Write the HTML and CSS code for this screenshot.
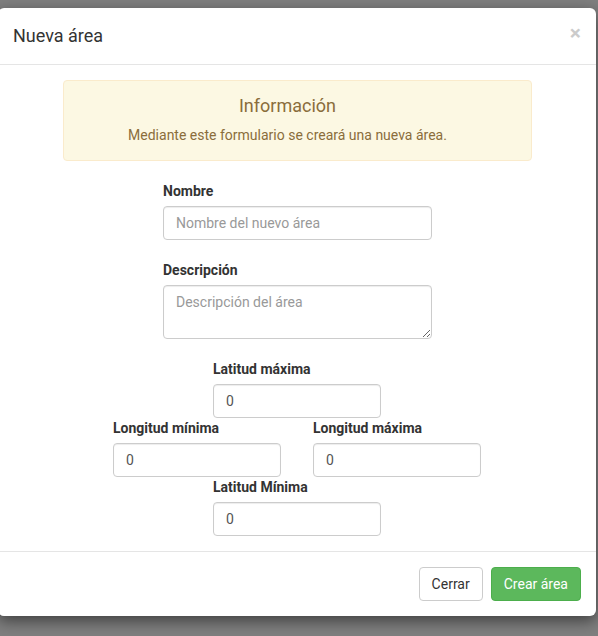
FILE: index.html
```html
<!DOCTYPE html>
<html lang="es">
<head>
<meta charset="utf-8">
<title>Nueva área</title>
<link rel="stylesheet" href="styles.css">
</head>
<body>
<div class="modal">
  <div class="modal-header">
    <h4 class="modal-title">Nueva área</h4>
    <button class="close" type="button">×</button>
  </div>
  <div class="modal-body">
    <div class="alert">
      <h4 class="alert-title">Información</h4>
      <p class="alert-text">Mediante este formulario se creará una nueva área.</p>
    </div>
    <div class="form-group wide">
      <label class="label">Nombre</label>
      <input class="input" type="text" placeholder="Nombre del nuevo área">
    </div>
    <div class="form-group wide">
      <label class="label">Descripción</label>
      <textarea class="input textarea" rows="2" placeholder="Descripción del área"></textarea>
    </div>
    <div class="coords">
      <div class="coord-row">
        <div class="coord">
          <label class="label">Latitud máxima</label>
          <input class="input" type="text" value="0">
        </div>
      </div>
      <div class="coord-row">
        <div class="coord">
          <label class="label">Longitud mínima</label>
          <input class="input" type="text" value="0">
        </div>
        <div class="coord">
          <label class="label">Longitud máxima</label>
          <input class="input" type="text" value="0">
        </div>
      </div>
      <div class="coord-row">
        <div class="coord">
          <label class="label">Latitud Mínima</label>
          <input class="input" type="text" value="0">
        </div>
      </div>
    </div>
  </div>
  <div class="modal-footer">
    <button class="btn btn-default" type="button">Cerrar</button>
    <button class="btn btn-success" type="button">Crear área</button>
  </div>
</div>
</body>
</html>
```

FILE: styles.css
```css
* { box-sizing: border-box; }
html, body { margin: 0; padding: 0; }
body {
  background: #7f7f7f;
  font-family: Roboto, "Liberation Sans", sans-serif;
  font-size: 14px;
  line-height: 20px;
  color: #333;
  height: 636px;
  overflow: hidden;
}
.modal {
  margin-top: 8px;
  margin-left: -2px;
  width: 598px;
  background: #fff;
  border-radius: 6px;
  box-shadow: 0 5px 15px rgba(0,0,0,.5);
}
.modal-header {
  display: flex;
  align-items: center;
  justify-content: space-between;
  padding: 15px;
  border-bottom: 1px solid #e5e5e5;
}
.modal-title {
  margin: 0;
  font-size: 18px;
  font-weight: 400;
  line-height: 26px;
  color: #333;
}
.close {
  background: none;
  border: 0;
  padding: 0;
  margin-top: -6px;
  font-family: inherit;
  font-size: 21px;
  font-weight: 700;
  line-height: 1;
  color: #000;
  opacity: .2;
}
.modal-body {
  padding: 15px;
}
.alert {
  width: 469px;
  margin: 0 0 20px 50px;
  padding: 15px 35px 15px 15px;
  background: #fcf8e3;
  border: 1px solid #faebcc;
  border-radius: 4px;
  color: #8a6d3b;
  text-align: center;
}
.alert-title {
  margin: 0 0 10px;
  font-size: 18px;
  font-weight: 400;
  line-height: 19px;
}
.alert-text {
  margin: 0;
}
.form-group {
  margin-bottom: 20px;
}
.wide {
  width: 269px;
  margin-left: 150px;
}
.label {
  display: block;
  font-weight: 700;
  margin-bottom: 5px;
}
.input {
  display: block;
  width: 100%;
  height: 34px;
  padding: 6px 12px;
  font-family: inherit;
  font-size: 14px;
  line-height: 20px;
  color: #555;
  background: #fff;
  border: 1px solid #ccc;
  border-radius: 4px;
  box-shadow: inset 0 1px 1px rgba(0,0,0,.075);
}
.input::placeholder { color: #999; }
.textarea {
  height: 54px;
  resize: vertical;
}
.coord-row {
  display: flex;
  justify-content: center;
  gap: 32px;
}
.coord {
  width: 168px;
}
.modal-footer {
  display: flex;
  justify-content: flex-end;
  gap: 8px;
  padding: 15px;
  border-top: 1px solid #e5e5e5;
}
.btn {
  height: 34px;
  padding: 6px 12px;
  font-family: inherit;
  font-size: 14px;
  line-height: 20px;
  border: 1px solid transparent;
  border-radius: 4px;
}
.btn-default {
  color: #333;
  background: #fff;
  border-color: #ccc;
}
.btn-success {
  color: #fff;
  background: #5cb85c;
  border-color: #4cae4c;
}
```
